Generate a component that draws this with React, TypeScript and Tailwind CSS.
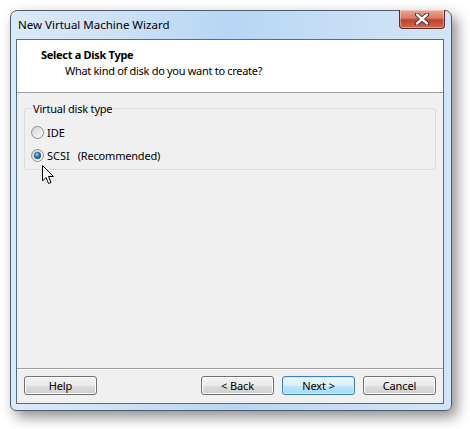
import React from "react";

const font = { fontFamily: '"Segoe UI", "Noto Sans", "Open Sans", sans-serif' };

function Radio({ checked }: { checked?: boolean }) {
  return (
    <svg width="13" height="13" viewBox="0 0 13 13" className="shrink-0">
      <defs>
        <linearGradient id={checked ? "rg1" : "rg0"} x1="0" y1="0" x2="1" y2="1">
          <stop offset="0" stopColor="#cfcfcf" />
          <stop offset="1" stopColor="#ffffff" />
        </linearGradient>
        <radialGradient id="dot" cx="0.4" cy="0.35" r="0.7">
          <stop offset="0" stopColor="#8ad3f7" />
          <stop offset="0.6" stopColor="#1b6fb3" />
          <stop offset="1" stopColor="#0d4a86" />
        </radialGradient>
      </defs>
      <circle cx="6.5" cy="6.5" r="6" fill={`url(#${checked ? "rg1" : "rg0"})`} stroke="#8f8f8f" strokeWidth="1" />
      {checked && <circle cx="6.5" cy="6.5" r="3.3" fill="url(#dot)" stroke="#1c4f80" strokeWidth="0.6" />}
    </svg>
  );
}

function Btn({ label, primary }: { label: string; primary?: boolean }) {
  return (
    <div
      className={
        "w-[73px] h-[19px] rounded-[3px] border flex items-center justify-center text-[11px] tracking-[-0.1px] text-black leading-none " +
        (primary
          ? "border-[#3c7fb1] bg-[linear-gradient(#eaf6fd_0%,#d9f0fc_50%,#bee6fd_51%,#a7d9f5_100%)] shadow-[inset_0_0_0_1px_#c8ecff]"
          : "border-[#707070] bg-[linear-gradient(#f2f2f2_0%,#ebebeb_50%,#dddddd_51%,#cfcfcf_100%)] shadow-[inset_0_0_0_1px_#fcfcfc]")
      }
    >
      {label}
    </div>
  );
}

export default function App() {
  return (
    <div className="w-[470px] h-[429px] bg-white pt-[10px] pl-[10px] relative" style={font}>
      <div className="w-[442px] h-[401px] rounded-t-[7px] rounded-b-[6px] border border-[#4d5b6a] bg-[linear-gradient(90deg,#dce9f6_0%,#cfe3f6_20%,#b7d6f3_50%,#c6def5_75%,#d3e5f7_100%)] shadow-[5px_6px_14px_rgba(0,0,0,0.45)] flex flex-col relative">
        {/* title bar */}
        <div className="h-[28px] flex items-center pl-[7px] text-[11.5px] text-black">New Virtual Machine Wizard</div>
        {/* close button */}
        <div className="absolute top-[-1px] right-[6px] w-[46px] h-[19px] rounded-b-[4px] border border-[#5c2a23] border-t-0 bg-[linear-gradient(#e9a794_0%,#d77b66_45%,#c0412b_55%,#d2684f_100%)] flex items-center justify-center shadow-[inset_0_0_0_1px_rgba(255,255,255,0.35)]">
          <svg width="16" height="12" viewBox="0 0 16 12">
            <path d="M3 1.5 L13 10.5 M13 1.5 L3 10.5" stroke="#3b2320" strokeWidth="4.2" strokeLinecap="round" />
            <path d="M3 1.5 L13 10.5 M13 1.5 L3 10.5" stroke="#ffffff" strokeWidth="2.4" strokeLinecap="round" />
          </svg>
        </div>
        {/* client */}
        <div className="ml-[5px] mr-[7px] h-[365px] border border-[#5a6b7d] bg-[#f0f0f0] flex flex-col">
          <div className="h-[53px] bg-white border-b border-[#a0a0a0] flex flex-col pl-[24px] pt-[7px]">
            <div className="text-[11px] tracking-[-0.3px] font-bold text-black leading-[15px]">Select a Disk Type</div>
            <div className="text-[11px] tracking-[-0.3px] text-black leading-[15px] pl-[24px] pt-[1px]">What kind of disk do you want to create?</div>
          </div>
          <div className="flex-1 px-[7px] pt-[15px] relative">
            <div className="relative h-[62px] w-[412px] rounded-[3px] border border-[#d5dfe5]">
              <div className="absolute left-[7px] top-[-8px] px-[1px] bg-[#f0f0f0] text-[11px] tracking-[-0.2px] text-black leading-[15px]">Virtual disk type</div>
              <div className="flex flex-col pl-[6px] pt-[16px] gap-[9px]">
                <div className="flex items-center gap-[3px] h-[14px]">
                  <Radio />
                  <span className="text-[11px] leading-none text-black">IDE</span>
                </div>
                <div className="flex items-center gap-[3px] h-[14px]">
                  <Radio checked />
                  <span className="text-[11px] leading-none text-black">SCSI</span>
                  <span className="text-[11px] tracking-[-0.2px] leading-none text-black ml-[5px]">(Recommended)</span>
                </div>
              </div>
            </div>
            {/* cursor */}
            <svg className="absolute left-[25px] top-[72px]" width="13" height="20" viewBox="0 0 13 20">
              <path d="M0.5 0.5 L0.5 16 L4 12.5 L6.5 18.5 L9 17.5 L6.5 11.5 L11.5 11.5 Z" fill="#ffffff" stroke="#000000" strokeWidth="1" strokeLinejoin="round" />
            </svg>
          </div>
          <div className="h-[35px] border-t border-[#a0a0a0] shadow-[inset_0_1px_0_#ffffff] flex items-start px-[7px] pt-[7px]">
            <Btn label="Help" />
            <div className="flex-1" />
            <div className="flex gap-[8px]">
              <Btn label="< Back" />
              <Btn label="Next >" primary />
              <Btn label="Cancel" />
            </div>
          </div>
        </div>
      </div>
    </div>
  );
}
